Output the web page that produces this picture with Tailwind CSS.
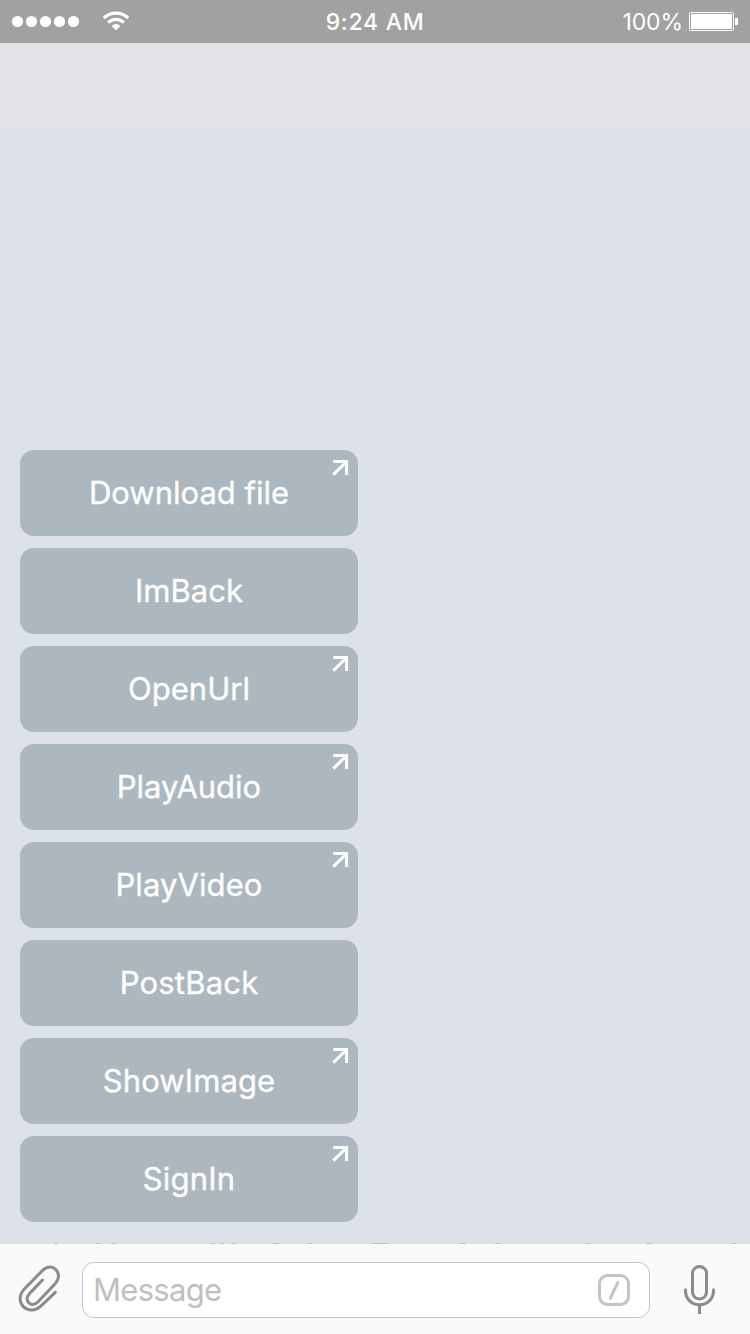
<!DOCTYPE html>
<html lang="en">
<head>
<meta charset="utf-8">
<title>Chat</title>
<script src="https://cdn.jsdelivr.net/npm/@tailwindcss/browser@4"></script>
</head>
<body class="w-[750px] h-[1334px] overflow-hidden flex flex-col bg-[#dde1ea] font-['Inter','Liberation_Sans',sans-serif]">
<svg class="hidden"><defs><symbol id="arrow" viewBox="0 0 18 18"><path d="M1.3 3.6H14.6V17M14 4.2L1.3 16.6" fill="none" stroke="#fff" stroke-width="3"/></symbol></defs></svg>
<header class="h-[43px] shrink-0 bg-[#a1a1a1] text-white grid grid-cols-3 items-start">
  <svg class="w-[140px] h-[43px]" viewBox="0 0 140 43" fill="#fff"><circle cx="17.5" cy="21.5" r="5.6"/><circle cx="31.5" cy="21.5" r="5.6"/><circle cx="45.5" cy="21.5" r="5.6"/><circle cx="59.5" cy="21.5" r="5.6"/><circle cx="73.5" cy="21.5" r="5.6"/><path d="M103.9 18A17.5 17.5 0 0 1 128.1 18M108.2 22.6A11 11 0 0 1 123.8 22.6" fill="none" stroke="#fff" stroke-width="3.2"/><path d="M111.6 25.9A6.3 6.3 0 0 1 120.4 25.9L116 30.3Z"/></svg>
  <div class="text-center text-[23px] leading-[45px] font-medium tracking-[0.7px]">9:24 AM</div>
  <div class="flex items-start justify-end gap-[6px] pr-3"><span class="text-[23px] leading-[45px] tracking-[-0.1px]">100%</span><svg class="w-[49px] h-[20px] mt-3" viewBox="0 0 49 20"><rect x=".5" y=".5" width="44" height="18" rx="1" fill="none" stroke="#fff"/><rect x="2" y="2" width="41" height="15" fill="#fff"/><path d="M46 6h2q1 0 1 1v5q0 1-1 1h-2z" fill="#fff"/></svg></div>
</header>
<div class="h-[85px] shrink-0 bg-[#e1e3e8]"></div>
<main class="h-[1115px] shrink-0 pl-5 pt-[322px] flex flex-col gap-3 text-white text-[31px] leading-[86px] text-center [-webkit-text-stroke:0.35px_#fff]">
  <button class="relative w-[338px] h-[86px] shrink-0 rounded-[14px] bg-[#adb7c0]"><span>Download file</span><svg class="absolute right-2 top-2 size-[18px]"><use href="#arrow"/></svg></button>
  <button class="relative w-[338px] h-[86px] shrink-0 rounded-[14px] bg-[#adb7c0]"><span>ImBack</span></button>
  <button class="relative w-[338px] h-[86px] shrink-0 rounded-[14px] bg-[#adb7c0]"><span>OpenUrl</span><svg class="absolute right-2 top-2 size-[18px]"><use href="#arrow"/></svg></button>
  <button class="relative w-[338px] h-[86px] shrink-0 rounded-[14px] bg-[#adb7c0]"><span>PlayAudio</span><svg class="absolute right-2 top-2 size-[18px]"><use href="#arrow"/></svg></button>
  <button class="relative w-[338px] h-[86px] shrink-0 rounded-[14px] bg-[#adb7c0]"><span class="tracking-[0.1px]">PlayVideo</span><svg class="absolute right-2 top-2 size-[18px]"><use href="#arrow"/></svg></button>
  <button class="relative w-[338px] h-[86px] shrink-0 rounded-[14px] bg-[#adb7c0]"><span class="tracking-[0.2px]">PostBack</span></button>
  <button class="relative w-[338px] h-[86px] shrink-0 rounded-[14px] bg-[#adb7c0]"><span class="tracking-[0.1px]">ShowImage</span><svg class="absolute right-2 top-2 size-[18px]"><use href="#arrow"/></svg></button>
  <button class="relative w-[338px] h-[86px] shrink-0 rounded-[14px] bg-[#adb7c0]"><span class="tracking-[0.2px]">SignIn</span><svg class="absolute right-2 top-2 size-[18px]"><use href="#arrow"/></svg></button>
</main>
<svg class="w-[750px] h-px shrink-0 bg-[#dbe1e6]" viewBox="0 0 750 1"><path d="M54 .5h4M96 .5h4M111 .5h4M211 .5h4M221 .5h3M231 .5h4M273 .5h6M308 .5h4M372 .5h16M460 .5h6M495 .5h5M586 .5h4M646 .5h5M732 .5h4" stroke="#b9bfc5"/></svg>
<footer class="h-[90px] shrink-0 bg-[#f9fafa] flex items-start">
  <svg class="w-[82px] h-[90px] shrink-0" viewBox="0 0 82 90" fill="none" stroke="#8a8a8f" stroke-width="3" stroke-linecap="round" stroke-linejoin="round"><path d="M42.5 36L29.2 49.9C23.3 56.5 31.3 64.5 37.8 58L55.6 39.3C64.1 29.5 52.3 17.2 42.8 26.2L24.8 44.5C11.8 58.2 28.6 73.2 40.8 62.2L55.3 48.4"/></svg>
  <div class="mt-[18px] w-[568px] h-[56px] shrink-0 rounded-[12px] border border-[#c3c4c9] bg-white flex items-center justify-between pl-[10px] pr-[18px]">
    <span class="text-[31px] leading-[54px] text-[#bfbfbf] tracking-[-0.7px]">Message</span>
    <svg class="size-[34px]" viewBox="0 0 34 34" fill="none" stroke="#c4c4c6" stroke-width="3"><rect x="2.5" y="2.5" width="29" height="29" rx="8"/><path d="M20.8 9.5L13.2 25.3" stroke-linecap="round"/></svg>
  </div>
  <svg class="w-[100px] h-[90px] shrink-0" viewBox="0 0 100 90" fill="none" stroke="#8a8a8f" stroke-width="3"><rect x="42.5" y="22.5" width="14" height="32.5" rx="7"/><path d="M35.5 45.8V46.5C35.5 65.5 63.5 65.5 63.5 46.5V45.8" stroke-linecap="round"/><path d="M49.5 60V70"/></svg>
</footer>
</body>
</html>
